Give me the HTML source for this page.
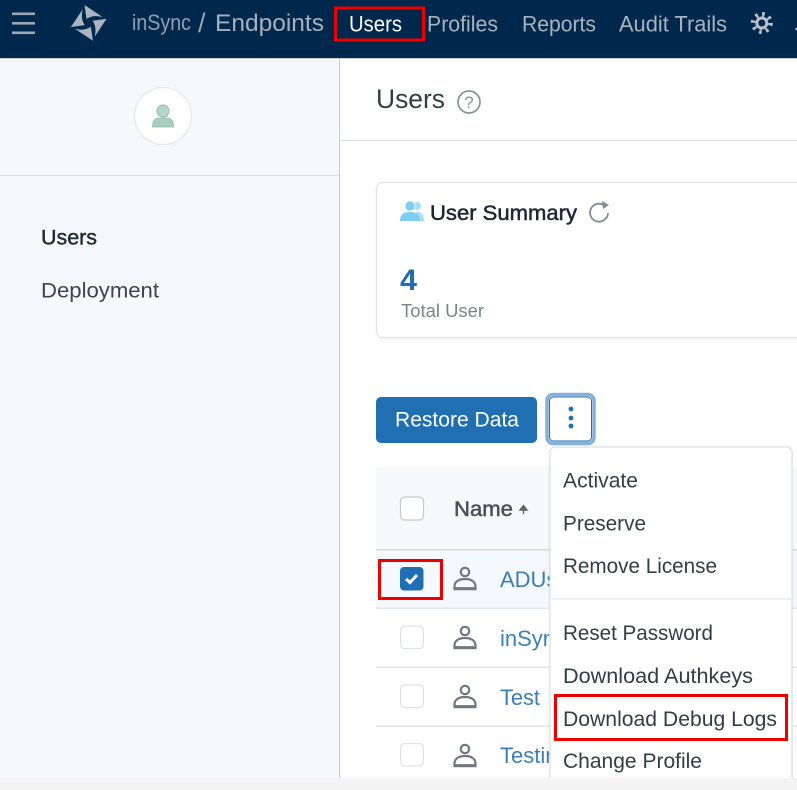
<!DOCTYPE html>
<html>
<head>
<meta charset="utf-8">
<title>Users</title>
<style>
html,body{margin:0;padding:0;background:#fff;width:797px;height:790px;overflow:hidden}
svg{display:block}
text{font-family:"Liberation Sans",sans-serif}
</style>
</head>
<body>
<svg width="797" height="790" viewBox="0 0 797 790" xmlns="http://www.w3.org/2000/svg">
<defs>
<filter id="sh" x="-10%" y="-10%" width="120%" height="120%"><feDropShadow dx="0" dy="1" stdDeviation="1.500" flood-color="#000" flood-opacity=".07"/></filter>
<g id="pi" fill="none" stroke="#6f7881" stroke-width="2.200">
<circle cx="0" cy="-6" r="4.200"/>
<path d="M-10.500 11H10.500V8.500C10.500 3.500 6 1 0 1S-10.500 3.500-10.500 8.500Z"/>
<path d="M-11 10.600H11" stroke-width="3"/>
</g>
</defs>

<!-- header -->
<rect x="0" y="0" width="797" height="58" fill="#00284d"/>
<rect x="0" y="58" width="797" height="1" fill="#c9ced4"/>
<g fill="#9ca7b4">
<rect x="12" y="12.500" width="23" height="2.600"/>
<rect x="12" y="22" width="23" height="2.600"/>
<rect x="12" y="31.500" width="23" height="2.600"/>
</g>
<g fill="#aab5c1">
<path d="M84.500 5L102.500 17Q93 14.500 86.500 19Z"/>
<path d="M84.500 5L102.500 17Q93 14.500 86.500 19Z" transform="rotate(90 88.700 22.900)"/>
<path d="M84.500 5L102.500 17Q93 14.500 86.500 19Z" transform="rotate(180 88.700 22.900)"/>
<path d="M84.500 5L102.500 17Q93 14.500 86.500 19Z" transform="rotate(270 88.700 22.900)"/>
</g>
<text x="132" y="30" font-size="22" fill="#8fa0b1" textLength="59" lengthAdjust="spacingAndGlyphs">inSync</text>
<text x="198" y="32" font-size="27" fill="#98a5b2">/</text>
<text x="215" y="31" font-size="24" fill="#a5b0bc" textLength="109" lengthAdjust="spacingAndGlyphs">Endpoints</text>
<text x="349" y="31.500" font-size="22" fill="#ffffff" textLength="53" lengthAdjust="spacingAndGlyphs">Users</text>
<text x="427" y="31.500" font-size="22" fill="#a8b3bf" textLength="71" lengthAdjust="spacingAndGlyphs">Profiles</text>
<text x="522" y="31.500" font-size="22" fill="#a8b3bf" textLength="74" lengthAdjust="spacingAndGlyphs">Reports</text>
<text x="619" y="31.500" font-size="22" fill="#a8b3bf" textLength="108" lengthAdjust="spacingAndGlyphs">Audit Trails</text>
<circle cx="761.800" cy="23" r="5" fill="none" stroke="#b9c1ca" stroke-width="3"/>
<circle cx="761.800" cy="23" r="8.750" fill="none" stroke="#b9c1ca" stroke-width="4.500" stroke-dasharray="2.600 4.270"/>
<circle cx="796.500" cy="29" r="1.300" fill="#a8b3bf"/>
<rect x="335.500" y="8" width="88" height="32" fill="none" stroke="#ee0000" stroke-width="3"/>

<!-- sidebar -->
<rect x="0" y="59" width="339" height="719" fill="#f7f8fb"/>
<rect x="339" y="59" width="1" height="719" fill="#c7c9cc"/>
<circle cx="163" cy="116" r="28.500" fill="#fff" stroke="#e5e7ea" stroke-width="1.200"/>
<path d="M152.500 127Q152.500 119 158 118H168Q173.500 119 173.500 127Z" fill="#a9cdbf" stroke="#8fbba9" stroke-width=".8"/>
<circle cx="163" cy="111" r="6" fill="#b5d6ca" stroke="#8fbba9" stroke-width="1"/>
<rect x="0" y="175" width="339" height="1" fill="#d9dde1"/>
<text x="41" y="244.500" font-size="21" fill="#1f2a36" stroke="#1f2a36" stroke-width=".45" textLength="56" lengthAdjust="spacingAndGlyphs">Users</text>
<text x="41" y="297.500" font-size="21" fill="#3c444d" textLength="118" lengthAdjust="spacingAndGlyphs">Deployment</text>

<!-- page title -->
<text x="376" y="108" font-size="27" fill="#333c47" textLength="69" lengthAdjust="spacingAndGlyphs">Users</text>
<circle cx="469" cy="102" r="11" fill="none" stroke="#8d9298" stroke-width="1.700"/>
<text x="469" y="108" font-size="17" fill="#8d9298" text-anchor="middle">?</text>
<rect x="340" y="140" width="457" height="1" fill="#dcdfe2"/>

<!-- card -->
<rect x="376.500" y="182.500" width="440" height="155" rx="6" fill="#fff" stroke="#e1e3e5" stroke-width="1.200" filter="url(#sh)"/>
<circle cx="417" cy="206" r="4" fill="#a9def5"/>
<path d="M416 211.500C422 211.500 424 216 424 221H418Z" fill="#a9def5"/>
<circle cx="410" cy="206" r="5" fill="#7fcdf0" stroke="#fff" stroke-width=".6"/>
<path d="M400 221C400 214 404 212 410 212S420 214 420 221Z" fill="#7fcdf0"/>
<text x="430" y="220" font-size="21" fill="#1d2733" stroke="#1d2733" stroke-width=".5" textLength="147" lengthAdjust="spacingAndGlyphs">User Summary</text>
<path d="M606 207A9 9 0 1 0 608 213" fill="none" stroke="#858c93" stroke-width="1.800"/>
<path d="M602 201L609 205L603 209Z" fill="#858c93"/>
<text x="400" y="290" font-size="30" font-weight="700" fill="#1f6eb3" textLength="17" lengthAdjust="spacingAndGlyphs">4</text>
<text x="401" y="317" font-size="18" fill="#7a848f" textLength="83" lengthAdjust="spacingAndGlyphs">Total User</text>

<!-- buttons -->
<rect x="376" y="397" width="161" height="46" rx="5" fill="#1f6fb2"/>
<text x="395" y="426.500" font-size="21" fill="#fff" textLength="124" lengthAdjust="spacingAndGlyphs">Restore Data</text>
<rect x="547" y="394.500" width="47" height="49" rx="6" fill="#fff" stroke="#85b1d8" stroke-width="3.500"/>
<rect x="549.500" y="397" width="42" height="44" rx="4" fill="#fff" stroke="#1f6fb2" stroke-width="1"/>
<circle cx="571" cy="409" r="2.400" fill="#1f6fb2"/>
<circle cx="571" cy="418" r="2.400" fill="#1f6fb2"/>
<circle cx="571" cy="426" r="2.400" fill="#1f6fb2"/>

<!-- table -->
<rect x="376" y="467" width="421" height="82" fill="#f8f9fb"/>
<rect x="376" y="549" width="421" height="1.500" fill="#d5dade"/>
<rect x="376" y="550.500" width="421" height="57" fill="#f5f8fd"/>
<rect x="376" y="607.500" width="421" height="1.500" fill="#e3e6e9"/>
<rect x="376" y="666.500" width="421" height="1.500" fill="#e3e6e9"/>
<rect x="376" y="725.500" width="421" height="1.500" fill="#e3e6e9"/>
<rect x="400.500" y="497" width="23" height="23" rx="4" fill="#fff" stroke="#c4c7cb" stroke-width="1.200"/>
<text x="454" y="516" font-size="21" fill="#4b5058" stroke="#4b5058" stroke-width=".5" textLength="59" lengthAdjust="spacingAndGlyphs">Name</text>
<path d="M523.500 514V508M520 510L523.500 505.500L527 510Z" fill="#5d6269" stroke="#5d6269" stroke-width="1.400"/>

<rect x="400" y="567" width="23.500" height="23.500" rx="4" fill="#1f6fb2"/>
<path d="M406 579L410 582.500L417 575" fill="none" stroke="#fff" stroke-width="3"/>
<rect x="400.500" y="626" width="23" height="22.500" rx="4" fill="#fff" stroke="#dfe2e5" stroke-width="1.200"/>
<rect x="400.500" y="685" width="23" height="22.500" rx="4" fill="#fff" stroke="#dfe2e5" stroke-width="1.200"/>
<rect x="400.500" y="743.500" width="23" height="22.500" rx="4" fill="#fff" stroke="#dfe2e5" stroke-width="1.200"/>
<use href="#pi" x="465" y="578"/>
<use href="#pi" x="465" y="637"/>
<use href="#pi" x="465" y="696"/>
<use href="#pi" x="465" y="755"/>
<text x="500" y="587" font-size="22" fill="#3a7fb9">ADUser</text>
<text x="500" y="646" font-size="22" fill="#3a7fb9">inSync</text>
<text x="500" y="705" font-size="22" fill="#3a7fb9" textLength="40" lengthAdjust="spacingAndGlyphs">Test</text>
<text x="500" y="763" font-size="22" fill="#3a7fb9">Testing</text>
<rect x="379.500" y="560.500" width="62" height="38" fill="none" stroke="#ee0000" stroke-width="3"/>

<!-- dropdown -->
<rect x="550" y="447" width="242" height="340" rx="5" fill="#fff" stroke="#dcdee0" stroke-width="1.200" filter="url(#sh)"/>
<rect x="551" y="598" width="240" height="2" fill="#eff0f2"/>
<g font-size="21" fill="#343c47">
<text x="563" y="487.500" textLength="75" lengthAdjust="spacingAndGlyphs">Activate</text>
<text x="563" y="530.500" textLength="83" lengthAdjust="spacingAndGlyphs">Preserve</text>
<text x="563" y="573" textLength="154" lengthAdjust="spacingAndGlyphs">Remove License</text>
<text x="563" y="640" textLength="150" lengthAdjust="spacingAndGlyphs">Reset Password</text>
<text x="563" y="683" textLength="190" lengthAdjust="spacingAndGlyphs">Download Authkeys</text>
<text x="563" y="726" textLength="214" lengthAdjust="spacingAndGlyphs">Download Debug Logs</text>
<text x="563" y="768" textLength="139" lengthAdjust="spacingAndGlyphs">Change Profile</text>
</g>
<rect x="555.500" y="695.500" width="231" height="44" fill="none" stroke="#ee0000" stroke-width="3"/>

<!-- bottom strip -->
<rect x="0" y="778" width="797" height="12" fill="#f4f4f5"/>
</svg>
</body>
</html>
